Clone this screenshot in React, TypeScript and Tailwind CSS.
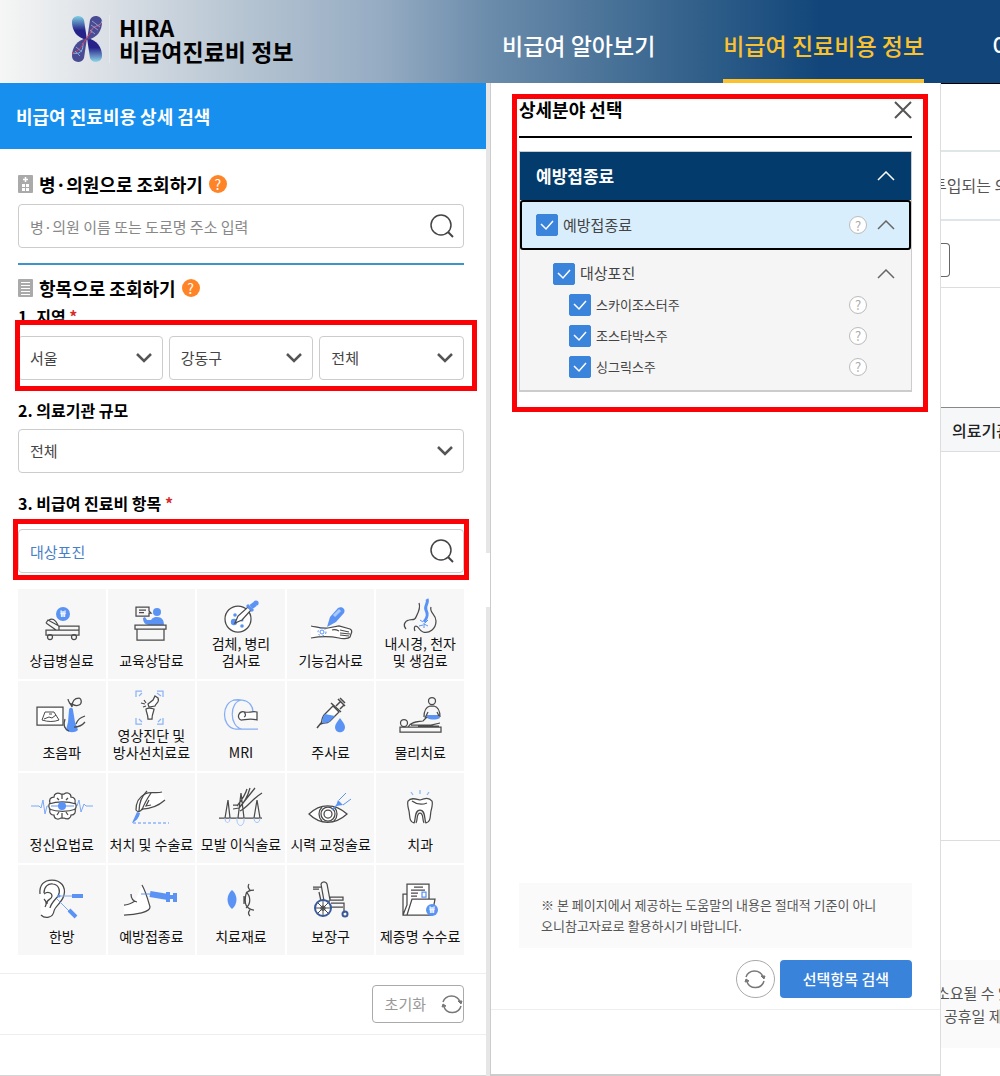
import { useState } from 'react'
import type { ReactNode } from 'react'

const INK = '#4a4a4a'
const BLUE = '#5b93f5'

function Won({ x, y, r }: { x: number; y: number; r: number }) {
  return (
    <>
      <circle cx={x} cy={y} r={r} fill={BLUE} stroke="none" />
      <text x={x} y={y + 3} textAnchor="middle" fontSize="9" fontWeight="700" fill="#fff" stroke="none">
        ₩
      </text>
    </>
  )
}

const CATEGORIES: { label: string[]; icon: ReactNode }[] = [
  {
    label: ['상급병실료'],
    icon: (
      <>
        <Won x={33} y={25} r={7} />
        <path d="M16 41h33v5H16zM28 37h21v4M16 34l2-3 11 6v4M16 34l10 7M19 31c3-2 6-1 9 5" />
        <circle cx="20" cy="48" r="2.500" />
        <circle cx="44" cy="48" r="2.500" />
      </>
    ),
  },
  {
    label: ['교육상담료'],
    icon: (
      <>
        <path d="M17 18h13v4l2 2h-2v3H17zM20 21h7M20 23.500h5" />
        <g fill={BLUE} stroke="none">
          <circle cx="38" cy="23" r="4" />
          <path d="M24 29l2-1 2 3 4 0c2-3 4-3 6-3 5 0 7 3 7 8H30c-4 0-6-3-6-7z" />
        </g>
        <path d="M16 36h31v4H16zM18 40v11h27V40" />
      </>
    ),
  },
  {
    label: ['검체, 병리', '검사료'],
    icon: (
      <>
        <circle cx="29" cy="30" r="13" fill="#fff" />
        <g fill={BLUE} stroke="none">
          <circle cx="26" cy="26" r="1.800" />
          <circle cx="25" cy="33" r="3.200" />
          <circle cx="33" cy="31" r="1.500" />
          <circle cx="33" cy="37" r="1.800" />
        </g>
        <path d="M26 34l3-7 10-9 3 3-9 10z" fill="#fff" />
        <g stroke={BLUE}>
          <path d="M38 16l6 6" strokeWidth="3" />
          <path d="M42 18l4-3" strokeWidth="5" />
          <circle cx="47" cy="14" r="2" fill={BLUE} />
        </g>
      </>
    ),
  },
  {
    label: ['기능검사료'],
    icon: (
      <>
        <path d="M12 37c6 1 11 3 17 2l11-2 11 3c2 1 2 3 1 5l-1 3c-2 2-8 2-11 1-9-2-18-2-28 0" fill="#fff" />
        <path d="M33 41c3-1 5 0 7 1M41 41l9 2M41 44l10 1M41 46l9 1" />
        <path d="M28 38l3-10 8-9c4-2 8 1 6 5l-8 9z" fill={BLUE} stroke="none" />
        <path d="M35 27l6-6" stroke="#a9caff" strokeWidth="3" />
        <g stroke={BLUE} strokeWidth="1">
          <circle cx="23" cy="43" r="2" />
          <circle cx="23" cy="43" r="4" strokeDasharray="2 2" />
        </g>
      </>
    ),
  },
  {
    label: ['내시경, 천자', '및 생검료'],
    icon: (
      <>
        <path d="M31 14c2 5-1 10-3 14-1 4-4 2-7 3-5 1-6 6-3 9M43 18c-2 6 5 7 5 14 0 8-7 13-13 11-4-1-4-6-7-6-2 0-2 3-1 5" />
        <path d="M39 10c2 4-3 7-1 11 2 4 2 7-2 12" stroke={BLUE} strokeWidth="3" />
        <path d="M32 31l3 2M31 37l4-1M36 34v5M40 37l-4-2M40 31l-3 3" stroke={BLUE} strokeWidth="1" />
      </>
    ),
  },
  {
    label: ['초음파'],
    icon: (
      <>
        <path d="M7 26h26v18H7z" fill="#fff" />
        <path d="M15 31h9l5 8c-5 2-11 2-17 0zM14 38l5-2 3 1 4-3M19 33h3" strokeWidth="1" />
        <path d="M39 29c0-3 4-3 4 0l2 12 3 8c-3 3-9 3-12 0l2-8z" fill={BLUE} stroke="none" />
        <path d="M38 18c0 3 3 5 4 8 0-6 3-9 7-9 3 1 3 6 0 7-4 2-6-1-10-2M55 35c-5 2-7 3-9 8M55 41c-4 5-8 5-11 5M35 38c-2 6-1 10 4 12" />
      </>
    ),
  },
  {
    label: ['영상진단 및', '방사선치료료'],
    icon: (
      <>
        <path
          d="M17 16v-6h6M38 10h6v6M44 37v6h-6M23 43h-6v-6M20 15l3-3M38 12l4 3M20 38l3 3M42 38l-3 3"
          stroke="#8db4f7"
        />
        <path d="M36 15l3 2c2 4-2 5-3 8l-6 1-1-3 5-4zM27 28c3-2 5-1 8 0 0 3-2 4-2 10h-4c0-5-2-7-2-10zM22 22l4 1M25 19l2 3M24 26l3-1" fill="#fff" />
      </>
    ),
  },
  {
    label: ['MRI'],
    icon: (
      <>
        <path
          d="M49 48H26c-14-2-14-27 0-29h7c8 1 11 7 11 12M33 19c-13 1-13 27 0 29M24 19c6-1 10 0 12 1"
          stroke="#86aef5"
        />
        <path d="M48 31c-5-1-9 1-12 0-6-2-9 6-4 8 4 0 9-2 16 0zM35 31c2 2 2 4 0 5" fill="#fff" />
      </>
    ),
  },
  {
    label: ['주사료'],
    icon: (
      <>
        <path d="M25 34l9-9 6 6-9 9c-2 2-5 2-6 2l-3 1 1-4c0-2 1-3 2-5z" fill="#fff" />
        <path d="M26 33l10 2-6 6c-2 1-5 1-7 1l1-6z" fill={BLUE} stroke="none" />
        <path d="M22 42l-4 5M32 22l10 9M37 25l4-4M41 28l4-4M39 18l7 7M41 17l5 5" strokeWidth="1.500" />
        <path d="M41 37c2 3 5 6 5 9 0 7-10 7-10 0 0-3 3-6 5-9z" fill={BLUE} stroke="none" />
      </>
    ),
  },
  {
    label: ['물리치료'],
    icon: (
      <>
        <path d="M38 34h13l1 3c-4 2-9 2-13 0z" fill={BLUE} stroke="none" />
        <circle cx="44" cy="20" r="3.500" />
        <path d="M36 36c0-6 2-10 6-11h4c4 1 6 5 6 11M40 31l-3 6M49 31l2 4" />
        <circle cx="16" cy="42" r="3.500" />
        <path d="M12 46h41v5H12zM20 46c4-6 10-5 15-6l4-4M23 44h20l9-2M30 45h21" />
      </>
    ),
  },
  {
    label: ['정신요법료'],
    icon: (
      <>
        <path d="M1 33h8l2 2 2-8 2 14 2-8h30l2-6 2 12 3-8 2 2h7" stroke="#7ba8f6" strokeWidth="1" />
        <path
          d="M31 21c-4-2-7 0-7 3-4 0-5 3-4 6-2 2-1 5 0 6-1 4 1 6 4 6 0 4 4 5 7 3h3c4 2 7 0 7-3 4 0 5-3 4-6 2-2 1-5 0-6 1-4-1-6-4-6 0-4-4-5-7-3zM19 31c8-3 19-3 27 0M19 36c8 3 19 3 27 0M27 25l2 2M38 25l-2 2M27 42l2-3M38 42l-2-3M32 21v5M32 40v5"
          fill="#fff"
        />
        <path d="M21 33h23" stroke="#7ba8f6" />
        <circle cx="32" cy="33" r="4" fill={BLUE} stroke="none" />
      </>
    ),
  },
  {
    label: ['처치 및 수술료'],
    icon: (
      <>
        <path d="M43 19c-6 2-12-1-17 2-6 3-9 9-9 16 2 3 5 1 6-1 8 0 15-2 23-9" fill="#fff" />
        <path d="M28 18c-5 5-8 12-8 20M32 20c-4 6-7 11-9 17M30 27l-3 6 5-1" />
        <path d="M18 39l3 1c-1 5-4 8-8 10z" fill={BLUE} stroke="none" />
        <path d="M14 50h36" stroke={BLUE} strokeDasharray="3 2" strokeWidth="1" />
      </>
    ),
  },
  {
    label: ['모발 이식술료'],
    icon: (
      <>
        <path d="M10 45h43M16 45l3-18 2 18M29 45l3-25 3 25M45 45l3-18 3 18M24 32h5M24 36l6-1c4-4 8-9 11-20M30 35L46 15M31 38c8-4 12-12 22-18M28 33c4-5 8-10 10-17" />
        <path d="M16 45c0 6 5 6 5 0M28 45c-1 10 8 10 7 0M45 45c0 6 6 6 6 0" stroke="#a5c4fa" strokeWidth="1" />
      </>
    ),
  },
  {
    label: ['시력 교정술료'],
    icon: (
      <>
        <path d="M10 41c11-11 26-11 38 0-12 11-27 11-38 0z" fill="#fff" />
        <path d="M23 34c-4 4-4 10 0 14M35 34c4 4 4 10 0 14" />
        <circle cx="29" cy="41" r="7" />
        <circle cx="29" cy="41" r="4" />
        <path d="M33 37l7-7" stroke={BLUE} />
        <path d="M39 27l5 5-7 1z" fill={BLUE} stroke="none" />
        <path d="M40 27l7-7M44 32l8-6" stroke={BLUE} strokeWidth="1" />
      </>
    ),
  },
  {
    label: ['치과'],
    icon: (
      <>
        <path
          d="M32 27c-4-1-9-3-12 1-1 3 0 6 1 10 1 5 0 11 5 12 2-3 0-13 6-13s4 10 6 13c5-1 4-7 5-12 1-4 2-7 1-10-3-4-7-3-12-1zM28 50c2-3 0-10 4-10s2 7 4 10M24 28c4 3 10 4 15 2"
          fill="#fff"
        />
        <path d="M23 19l2 3M32 17v4M41 19l-2 3" stroke="#8db4f7" />
      </>
    ),
  },
  {
    label: ['한방'],
    icon: (
      <>
        <path
          d="M10 29c-1-9 4-14 12-14 9 0 14 7 12 15-2 8-9 11-10 16-1 7-9 8-13 4"
          fill="#fff"
        />
        <path d="M14 28c0-6 4-10 9-9 6 1 8 7 5 12-3 4-7 7-8 12M14 29c4-3 8-1 8 2 0 4-6 3-5 8M14 34c2 2 3 5 1 8" />
        <path d="M27 31h15M27 34l12 12" stroke="#7ba8f6" strokeWidth="1" />
        <path d="M42 31h11M39 45l7 7" stroke={BLUE} strokeWidth="4" />
        <circle cx="29" cy="31" r="1.500" fill={BLUE} stroke="none" />
      </>
    ),
  },
  {
    label: ['예방접종료'],
    icon: (
      <>
        <path d="M5 40c5 0 8-2 11-4L23 20c4 7 6 15 8 22 0 5-14 8-26 8z" fill="#fff" stroke="none" />
        <path d="M5 40c5 0 8-2 11-4M12 29c0 4 1 7 6 8M23 20c4 7 6 15 8 22 0 5-14 8-26 8" />
        <path d="M22 29h9" stroke={BLUE} strokeWidth="1" />
        <path d="M31 29l18 3" stroke={BLUE} strokeWidth="6" />
        <path d="M49 27v10M56 28v9M47 32h8" stroke={BLUE} strokeWidth="4" />
      </>
    ),
  },
  {
    label: ['치료재료'],
    icon: (
      <>
        <path d="M23 25c6 5 6 14 0 19-6-5-6-14 0-19z" fill={BLUE} stroke="none" />
        <path d="M40 19c-2 3 0 5 1 6M45 25c-3 0-7 1-8 4-1 4-1 8 0 11 1 3 5 5 8 5M41 45c-2 2-2 4 0 6M37 27c5 4 5 12 0 16M35 31v8" />
      </>
    ),
  },
  {
    label: ['보장구'],
    icon: (
      <>
        <path d="M14 22h8M14 24h6M22 19c1-3 5-3 6 0l3 16M22 19l3 17M31 32h13v3H31zM25 36h6M32 38h13v10M32 42h12M20 27l2 9" />
        <circle cx="24" cy="43" r="8" fill="#fff" stroke="#38599a" strokeWidth="2" />
        <circle cx="24" cy="43" r="2" />
        <path d="M24 36v14M17 43h14M19 38l10 10M29 38L19 48" strokeWidth="1" />
        <circle cx="46" cy="49" r="2.500" stroke="#38599a" strokeWidth="2" />
      </>
    ),
  },
  {
    label: ['제증명 수수료'],
    icon: (
      <>
        <path d="M15 50V29h4V19h22v15h6l-3 16zM19 50l5-16h17M15 50l4-10V29M26 22h9M23 25h14M23 28h7M23 31h6" fill="#fff" />
        <path d="M34 27h4v5h-4z" stroke={BLUE} />
        <Won x={44} y={45} r={6} />
      </>
    ),
  },
]

const MEDICINES = ['스카이조스터주', '조스타박스주', '싱그릭스주']

function Chevron({ up, className }: { up?: boolean; className: string }) {
  return (
    <svg viewBox="0 0 18 10" fill="none" stroke="currentColor" className={className} aria-hidden="true">
      <path d={up ? 'M1 9l8-8 8 8' : 'M2 1l7 7 7-7'} />
    </svg>
  )
}

function SearchIcon() {
  return (
    <svg width="24" height="24" viewBox="0 0 24 24" fill="none" stroke="#444" strokeWidth="1.500" aria-hidden="true">
      <circle cx="11" cy="11" r="10" />
      <path d="M18 18l5 5" strokeWidth="2" />
    </svg>
  )
}

function RefreshIcon() {
  return (
    <svg width="22" height="20" viewBox="0 0 22 20" fill="none" stroke="#777" strokeWidth="1.500" aria-hidden="true">
      <path d="M2 8a9 9 0 0 1 17 0M20 12a9 9 0 0 1-17 1" />
      <path d="M17 7h4l-1 3zM1 13l1-3 3 2z" fill="#777" strokeWidth="1" />
    </svg>
  )
}

function Select({ label, id, options }: { label?: string; id?: string; options: string[] }) {
  return (
    <div className="relative min-w-0 flex-1">
      <select
        id={id}
        aria-label={label}
        className="h-11 w-full appearance-none rounded border border-[#ccc] bg-white px-[11px] text-[15px] text-[#444]"
      >
        {options.map((o) => (
          <option key={o}>{o}</option>
        ))}
      </select>
      <Chevron className="pointer-events-none absolute top-[17px] right-[10px] h-[10px] w-[18px] stroke-[2.5px] text-[#555]" />
    </div>
  )
}

function Check({ label, small }: { label: string; small?: boolean }) {
  return (
    <label className="flex items-center gap-[5px]">
      <span className="relative block h-[22px] w-[22px]">
        <input
          type="checkbox"
          defaultChecked
          className="peer block h-[22px] w-[22px] appearance-none rounded-[2px] border border-[#3b84db] bg-white checked:bg-[#3b84db]"
        />
        <svg
          viewBox="0 0 22 22"
          fill="none"
          stroke="#fff"
          strokeWidth="1.500"
          className="pointer-events-none absolute inset-0 hidden peer-checked:block"
          aria-hidden="true"
        >
          <path d="M5 10l5 5 7-8" />
        </svg>
      </span>
      <span className={small ? 'text-[13px]' : 'text-[15px]'}>{label}</span>
    </label>
  )
}

function HelpRing() {
  return (
    <button
      aria-label="도움말"
      className="flex h-[18px] w-[18px] items-center justify-center rounded-full border border-[#bbb] bg-white text-[13px] leading-none text-[#aaa]"
    >
      ?
    </button>
  )
}

function HelpDot() {
  return (
    <button
      aria-label="도움말"
      className="flex h-[18px] w-[18px] items-center justify-center rounded-full bg-[#ff8427] text-[14px] leading-none text-white"
    >
      ?
    </button>
  )
}

function Logo() {
  return (
    <svg width="32" height="48" viewBox="0 0 32 48" aria-hidden="true">
      <defs>
        <linearGradient id="down" x1="0" y1="0" x2="0" y2="1">
          <stop offset="0" stopColor="#7fd0e4" />
          <stop offset="0.6" stopColor="#25228a" />
        </linearGradient>
        <linearGradient id="up" x1="0" y1="1" x2="0" y2="0">
          <stop offset="0" stopColor="#8fd6ea" />
          <stop offset="0.6" stopColor="#25228a" />
        </linearGradient>
      </defs>
      <path d="M1 7c0-7 10-8 12-2l3 20C6 23 1 16 1 7z" fill="url(#down)" />
      <path d="M31 41c0 7-10 8-12 2l-3-20c10 2 15 9 15 18z" fill="url(#up)" />
      <path d="M31 7c0-7-10-8-12-2l-3 20c10-2 15-9 15-18z" fill="#4a4c93" />
      <path d="M1 41c0 7 10 8 12 2l3-20C6 25 1 32 1 41z" fill="#4a4c93" />
      <g fill="none" strokeWidth="1">
        <path d="M31 6c-1 7-11 3-11 12M2 38c9 2 10-4 10-10" stroke="#6fc5e6" />
        <path d="M31 8c-6 6-10 2-11 9l-7 10C10 33 8 36 1 38" stroke="#e0355c" />
        <path d="M21 6l8 6M20 10l7 5M19 15l5 4M5 32l6 5M4 36l5 5" stroke="#8f9bd0" />
      </g>
    </svg>
  )
}

function Marker({ className }: { className: string }) {
  return <div className={`pointer-events-none absolute border-[5px] border-[#fb0207] ${className}`} />
}

function Header() {
  return (
    <header className="flex h-[83px] overflow-hidden bg-[linear-gradient(90deg,#f5f6f5_0%,#dfe3e8_9%,#b4c3d1_25%,#96acc3_38%,#6b8cab_49%,#33618b_69%,#12467a_82%)] whitespace-nowrap">
      <div className="flex w-[49%] flex-none items-start pt-[15px] pl-[71px]">
        <Logo />
        <h1 className="ml-[6px] border-l border-white/30 pl-[9px] text-[23px] leading-6 font-bold text-black">
          HIRA
          <br />
          비급여진료비 정보
        </h1>
      </div>
      <nav className="flex flex-1 gap-[68px] pl-3 text-[23px] font-medium text-white">
        <a href="#about" className="flex flex-none items-center pt-2">
          비급여 알아보기
        </a>
        <a href="#cost" className="flex flex-none items-center border-b-4 border-[#fcc22d] pt-3 text-[#fcc22d]">
          비급여 진료비용 정보
        </a>
        <a href="#use" className="flex flex-none items-center pt-2">
          이
        </a>
      </nav>
    </header>
  )
}

function SearchPanel() {
  const [keyword, setKeyword] = useState('대상포진')
  return (
    <section className="flex min-w-0 flex-1 flex-col border-b border-[#d5d5d5]">
      <h2 className="bg-[#168fef] px-4 text-[18px] leading-[66px] font-bold text-white">비급여 진료비용 상세 검색</h2>
      <div className="pr-[22px] pl-[18px]">
        <div className="mt-[22px] flex items-center gap-[6px]">
          <svg width="15" height="18" viewBox="0 0 15 18" aria-hidden="true">
            <rect width="15" height="18" rx="1" fill="#aaa" />
            <path d="M7.500 2v5M5 4.500h5" stroke="#fff" strokeWidth="1.500" />
            <path d="M4 9h3v3H4zM8 9h3v3H8zM4 13h3v3H4zM8 13h3v3H8z" fill="#fff" />
          </svg>
          <h3 className="text-[18px] leading-[26px] font-bold">병·의원으로 조회하기</h3>
          <HelpDot />
        </div>
        <form className="relative mt-[7px]" onSubmit={(e) => e.preventDefault()}>
          <input
            aria-label="병·의원 검색"
            placeholder="병·의원 이름 또는 도로명 주소 입력"
            className="h-11 w-full rounded border border-[#ccc] px-[11px] pr-12 text-[15px] placeholder:text-[#888]"
          />
          <button aria-label="검색" className="absolute top-[10px] right-[10px]">
            <SearchIcon />
          </button>
        </form>

        <div className="mt-[15px] flex items-center gap-[6px] border-t-2 border-[#3b94cc] pt-[10px]">
          <svg width="15" height="18" viewBox="0 0 15 18" aria-hidden="true">
            <rect width="15" height="18" rx="1" fill="#aaa" />
            <path d="M3 3.500h9M3 6.500h9M3 9.500h9M3 12.500h9M3 15.500h9" stroke="#fff" />
          </svg>
          <h3 className="text-[18px] leading-[26px] font-bold">항목으로 조회하기</h3>
          <HelpDot />
        </div>
        <h4 className="mt-[3px] text-[16px] leading-6 font-bold">
          1. 지역 <span className="text-[#d92b2b]">*</span>
        </h4>
        <div className="relative mt-2 flex gap-[6px]">
          <Select label="시도" options={['서울']} />
          <Select label="시군구" options={['강동구']} />
          <Select label="읍면동" options={['전체']} />
          <Marker className="-top-4 -right-[13px] -bottom-[11px] -left-[3px]" />
        </div>
        <label htmlFor="scale" className="mt-[18px] block text-[16px] leading-6 font-bold">
          2. 의료기관 규모
        </label>
        <div className="mt-[7px] flex">
          <Select id="scale" options={['전체']} />
        </div>
        <label htmlFor="item" className="mt-[18px] block text-[16px] leading-6 font-bold">
          3. 비급여 진료비 항목 <span className="text-[#d92b2b]">*</span>
        </label>
        <form className="relative mt-[14px]" onSubmit={(e) => e.preventDefault()}>
          <input
            id="item"
            value={keyword}
            onChange={(e) => setKeyword(e.target.value)}
            className="block h-11 w-full rounded border border-[#ccc] px-[11px] pr-12 text-[15px] text-[#4a7fc8]"
          />
          <button aria-label="검색" className="absolute top-[10px] right-[10px]">
            <SearchIcon />
          </button>
          <Marker className="-top-[10px] -right-[5px] -bottom-[7px] -left-[5px]" />
        </form>

        <div className="mt-4 grid grid-cols-5 gap-[2px]">
          {CATEGORIES.map((c) => (
            <button
              key={c.label[0]}
              className="flex h-[90px] flex-col items-center justify-between bg-[#f7f7f7] pb-[10px] text-[14px] leading-[17px] whitespace-nowrap text-[#111]"
            >
              <svg
                viewBox="0 0 64 46"
                fill="none"
                stroke={INK}
                strokeWidth="1.250"
                className="h-[46px] w-16 flex-none overflow-visible"
                aria-hidden="true"
              >
                {c.icon}
              </svg>
              <span>
                {c.label.map((line) => (
                  <span key={line} className="block">
                    {line}
                  </span>
                ))}
              </span>
            </button>
          ))}
        </div>
      </div>
      <div className="mt-[18px] flex justify-end border-y border-[#eee] py-[11px] pr-[22px]">
        <button className="flex h-[38px] items-center gap-[15px] rounded border border-[#aaa] pl-3 text-[15px] text-[#999]">
          초기화
          <RefreshIcon />
        </button>
      </div>
    </section>
  )
}

function DetailPanel() {
  return (
    <section className="flex min-w-0 flex-col border border-t-0 border-b-2 border-[#ccc] border-r-[#ddd] bg-white px-7 text-[#444]">
      <div className="relative">
        <div className="flex h-[55px] items-center justify-between border-b-2 border-black">
          <h2 className="text-[18px] font-bold text-black">상세분야 선택</h2>
          <button aria-label="닫기">
            <svg width="18" height="18" viewBox="0 0 18 18" stroke="#555" strokeWidth="2" aria-hidden="true">
              <path d="M1 1l16 16M17 1L1 17" />
            </svg>
          </button>
        </div>
        <div className="mt-[13px] border border-b-2 border-[#ccc] bg-[#f5f5f5]">
          <button className="flex h-12 w-full items-center justify-between bg-[#033b6d] pr-4 pl-4 text-[17px] font-bold text-white">
            예방접종료
            <Chevron up className="h-[10px] w-[18px] stroke-[1.5px]" />
          </button>
          <div className="flex h-[50px] items-center justify-between rounded-[3px] border-2 border-black bg-[#d9eefc] px-[14px]">
            <Check label="예방접종료" />
            <div className="flex items-center gap-[10px]">
              <HelpRing />
              <Chevron up className="h-[10px] w-[18px] stroke-[1.5px] text-[#666]" />
            </div>
          </div>
          <div className="pt-3 pr-4 pb-2 pl-[33px]">
            <div className="flex h-[23px] items-center justify-between">
              <Check label="대상포진" />
              <Chevron up className="h-[10px] w-[18px] stroke-[1.5px] text-[#666]" />
            </div>
            <ul className="mt-1 pr-7 pl-4">
              {MEDICINES.map((name) => (
                <li key={name} className="flex h-[31px] items-center justify-between">
                  <Check label={name} small />
                  <HelpRing />
                </li>
              ))}
            </ul>
          </div>
        </div>
        <Marker className="top-[11px] -right-4 -bottom-[20px] -left-[7px]" />
      </div>

      <p className="mt-auto bg-[#fafafa] pt-[11px] pr-[20px] pb-3 pl-[22px] text-[13px] leading-[21px] break-all text-[#555]">
        ※ 본 페이지에서 제공하는 도움말의 내용은 절대적 기준이 아니
        <br />
        오니참고자료로 활용하시기 바랍니다.
      </p>
      <div className="-mx-7 mt-3 mb-16 flex items-center justify-end gap-[5px] border-b border-[#eee] pr-7 pb-[11px]">
        <button
          aria-label="초기화"
          className="flex h-[38px] w-[39px] items-center justify-center rounded-full border border-[#aaa] bg-white"
        >
          <RefreshIcon />
        </button>
        <button className="h-[38px] rounded bg-[#3983db] px-[23px] text-[15px] font-medium text-white">선택항목 검색</button>
      </div>
    </section>
  )
}

function ResultEdge() {
  return (
    <main className="flex min-w-0 flex-col overflow-hidden border-t border-black whitespace-nowrap text-[#555]">
      <p className="mt-[66px] h-[71px] border-y-2 border-[#dfe6ea] text-[16px] leading-[67px]">
        <span className="-ml-[9px]">투입되는 의</span>
      </p>
      <div className="h-[67px] border-b border-[#ddd] pt-[22px]">
        <input aria-label="결과 내 검색" className="h-[34px] w-[9px] rounded-r border border-l-0 border-[#666]" />
      </div>
      <table className="mt-[119px] w-full">
        <thead>
          <tr className="h-[44px] border-t border-b border-t-[#888] border-b-[#ddd] bg-[#f5f7f9]">
            <th className="pl-[11px] text-left text-[16px] font-medium text-[#222]">의료기관</th>
          </tr>
        </thead>
      </table>
      <div className="h-[389px] border-b border-[#ddd]" />
      <div className="mt-[119px] bg-[#fafafa] py-[21px] text-[15px] leading-[23px]">
        <p className="-ml-[5px]">소요될 수 있</p>
        <p className="pl-[3px]">공휴일 제외</p>
      </div>
    </main>
  )
}

export default function App() {
  return (
    <div className="flex min-h-screen flex-col bg-white font-['Noto_Sans_CJK_KR',sans-serif] text-black">
      <Header />
      <div className="grid flex-1 grid-cols-[490fr_451fr_59fr]">
        <div className="flex min-w-0">
          <SearchPanel />
          {/* collapse handle between the two panels */}
          <div className="flex w-1 flex-col bg-[#e6e6e6] pt-[470px]">
            <span className="h-[54px] bg-white" />
          </div>
        </div>
        <DetailPanel />
        <ResultEdge />
      </div>
    </div>
  )
}
